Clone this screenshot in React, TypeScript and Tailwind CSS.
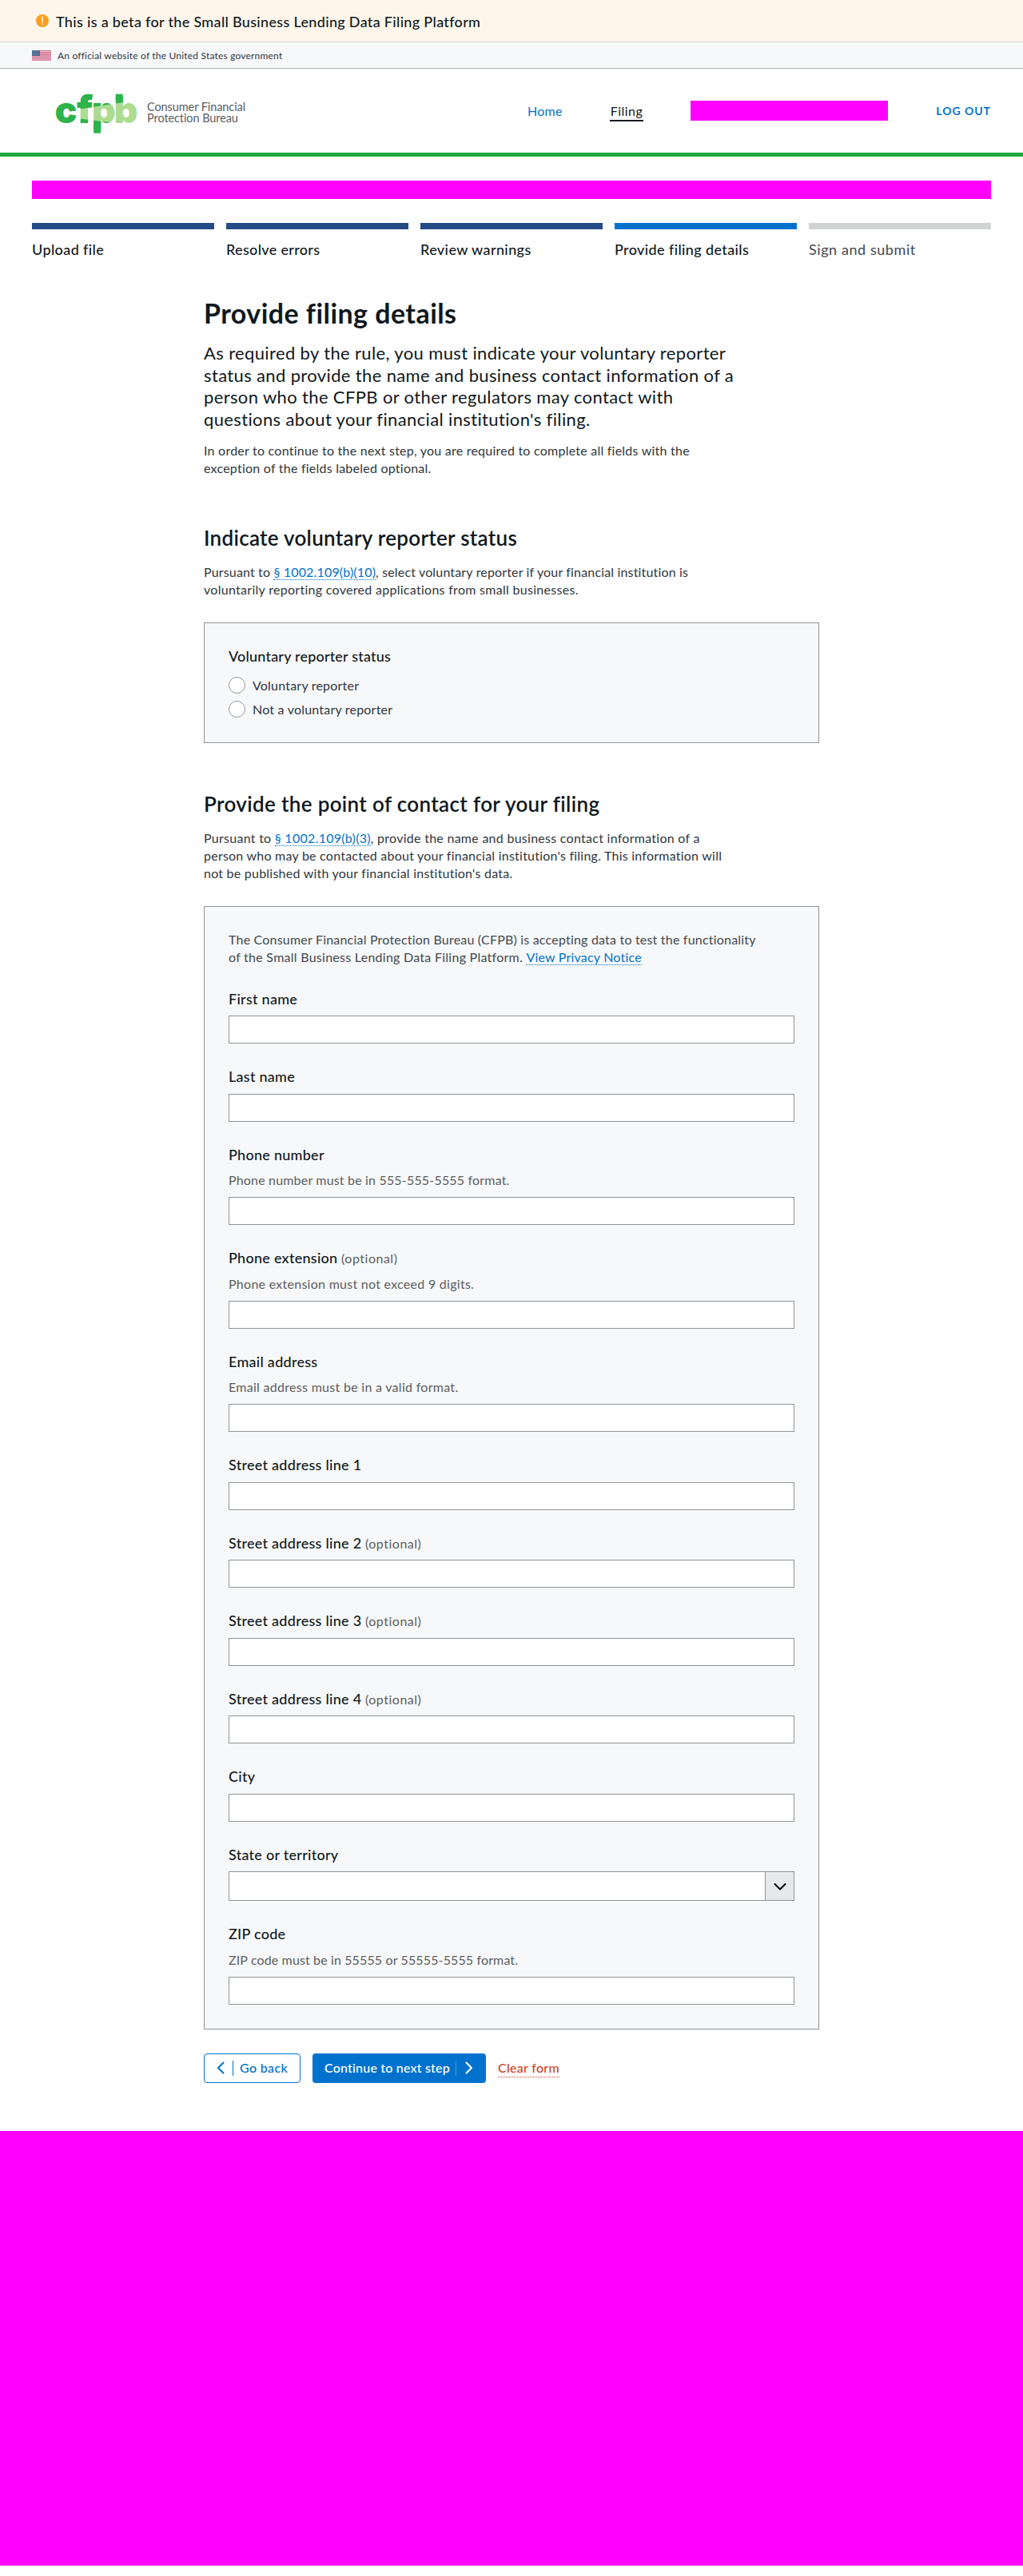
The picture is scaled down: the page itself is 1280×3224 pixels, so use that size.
import type { ReactNode } from 'react';

type FieldProps = {
  label: string;
  optional?: boolean;
  hint?: string;
  hintTracking?: string;
  select?: boolean;
};

const fields: FieldProps[] = [
  { label: 'First name' },
  { label: 'Last name' },
  { label: 'Phone number', hint: 'Phone number must be in 555-555-5555 format.', hintTracking: 'tracking-[0.011em]' },
  { label: 'Phone extension', optional: true, hint: 'Phone extension must not exceed 9 digits.', hintTracking: 'tracking-[0.017em]' },
  { label: 'Email address', hint: 'Email address must be in a valid format.', hintTracking: 'tracking-[0.018em]' },
  { label: 'Street address line 1' },
  { label: 'Street address line 2', optional: true },
  { label: 'Street address line 3', optional: true },
  { label: 'Street address line 4', optional: true },
  { label: 'City' },
  { label: 'State or territory', select: true },
  { label: 'ZIP code', hint: 'ZIP code must be in 55555 or 55555-5555 format.', hintTracking: 'tracking-[0.008em]' },
];

const steps = [
  { label: 'Upload file', bar: 'bg-[#254b87]', text: 'font-medium tracking-[0.022em] text-[#101820]' },
  { label: 'Resolve errors', bar: 'bg-[#254b87]', text: 'font-medium tracking-[0.018em] text-[#101820]' },
  { label: 'Review warnings', bar: 'bg-[#254b87]', text: 'font-medium tracking-[0.022em] text-[#101820]' },
  { label: 'Provide filing details', bar: 'bg-[#0072ce]', text: 'font-medium tracking-[0.021em] text-[#101820]' },
  { label: 'Sign and submit', bar: 'bg-[#d2d3d5]', text: 'tracking-[0.032em] text-[#43484e]' },
];

function Link({ children }: { children: ReactNode }) {
  return (
    <a href="#" className="border-b border-dotted border-[#0072ce] text-[#0072ce]">
      {children}
    </a>
  );
}

function Chevron({ d, className }: { d: string; className: string }) {
  return (
    <svg viewBox="0 0 16 16" fill="none" stroke="currentColor" strokeWidth="2" strokeLinecap="round" strokeLinejoin="round" className={className}>
      <path d={d} />
    </svg>
  );
}

function Logo() {
  return (
    <svg width="104" height="54" viewBox="68 114 104 54" className="shrink-0 overflow-visible" aria-label="cfpb">
      <defs>
        <pattern id="beam" patternUnits="userSpaceOnUse" x="60" y="100" width="130" height="90" viewBox="60 100 130 90">
          <rect x="60" y="100" width="130" height="90" fill="#2cb34a" />
          <polygon points="96,137 176,124.800 176,180 144.400,180 144.400,154 96,148" fill="#addc91" />
        </pattern>
      </defs>
      <g fill="url(#beam)">
        <text y="153.800" fontFamily="Inter, sans-serif" fontWeight="900" fontSize="46.5">
          <tspan x="68.6">c</tspan>
          <tspan x="96" fontSize="48.5">f</tspan>
          <tspan x="114.8">p</tspan>
          <tspan x="142.5">b</tspan>
        </text>
        <rect x="117.200" y="155" width="8.800" height="11.700" />
        <rect x="144.700" y="117.700" width="8.900" height="8" />
      </g>
    </svg>
  );
}

function Flag() {
  return (
    <svg width="24" height="13" viewBox="0 0 24 13" shapeRendering="crispEdges" className="shrink-0">
      <rect width="24" height="13" fill="#db9bb0" />
      {[0, 2, 4, 6, 8, 10, 12].map((y) => (
        <rect key={y} y={y} width="24" height="1" fill={y < 5 ? '#cf6b86' : '#da8fa7'} />
      ))}
      <rect y="1" width="24" height="1" fill="#edc9d4" />
      <rect y="3" width="24" height="1" fill="#e9bccb" />
      <rect width="10" height="7" fill="#4d6b90" />
      {[1, 3, 5].map((y) =>
        [1, 3, 5, 7].map((x) => <rect key={`${x}-${y}`} x={x} y={y} width="1" height="1" fill="#7189a6" />),
      )}
    </svg>
  );
}

function Field({ label, optional, hint, hintTracking = '', select }: FieldProps) {
  return (
    <div className="mt-[30px]">
      <label className="block h-[22.5px] text-[18px] leading-[22.5px] font-medium tracking-[0.015em] text-[#101820]">
        {label}
        {optional && <span className="text-[16px] font-normal tracking-[0.032em] text-[#5a5d61]"> (optional)</span>}
      </label>
      {hint && <p className={`mt-[10px] leading-[22px] text-[#5a5d61] ${hintTracking}`}>{hint}</p>}
      {select ? (
        <div className="mt-[10px] flex h-[37px] border border-[#919395] bg-white">
          <div className="flex-1" />
          <div className="flex w-[36px] items-center justify-center border-l border-[#919395] bg-[#e7e8e9] text-black">
            <Chevron d="M1.5 5l6.5 6.5L14.5 5" className="size-[16px]" />
          </div>
        </div>
      ) : (
        <input className="mt-[10px] block h-[35px] w-full border border-[#919395] bg-white px-2 outline-none" />
      )}
    </div>
  );
}

function Radio({ label, className }: { label: string; className: string }) {
  return (
    <label className={className}>
      <span className="size-[21px] rounded-full border border-[#919395] bg-white" />
      <span className="tracking-[0.013em]">{label}</span>
    </label>
  );
}

export default function App() {
  return (
    <div className="min-h-[3224px] bg-white font-['Lato',sans-serif] text-[16px] leading-[22px] text-[#2f363d]">
      <div className="flex h-[53px] items-center border-b border-[#d6d2ce] bg-[#fff6eb] pl-[45px]">
        <svg width="16" height="16" viewBox="0 0 16 16" className="shrink-0">
          <circle cx="8" cy="8" r="8" fill="#ff9e1b" />
          <path d="M8 3.3v6" stroke="#fff" strokeWidth="1.5" strokeLinecap="round" />
          <circle cx="8" cy="12.2" r="1" fill="#fff" />
        </svg>
        <p className="ml-[9px] pt-px text-[18px] font-medium tracking-[0.018em] text-[#101820]">
          This is a beta for the Small Business Lending Data Filing Platform
        </p>
      </div>
      <div className="flex h-[33px] items-center border-b border-[#b4b5b6] bg-[#f7f8f9] pl-[40px]">
        <Flag />
        <p className="ml-[8px] pt-[2px] text-[12px] leading-[16px] tracking-[0.016em]">
          An official website of the United States government
        </p>
      </div>
      <header className="flex h-[110px] items-center border-b-[5px] border-[#20aa3f] pr-[40px] pl-[68px]">
        <div className="pt-[5px]">
          <Logo />
        </div>
        <div className="ml-[12px] pt-[4px] text-[14.5px] leading-[14px] tracking-[-0.006em] text-[#5a5d61]">
          <p>Consumer Financial</p>
          <p>Protection Bureau</p>
        </div>
        <nav className="ml-auto flex items-center">
          <a href="#" className="tracking-[0.02em] text-[#0072ce]">Home</a>
          <a href="#" className="ml-[59px] flex h-[26px] items-center border-b-2 border-[#101820] px-px pt-[4px] pb-[2px] tracking-[0.028em] text-[#101820]">
            Filing
          </a>
          <div className="ml-[59px] h-[25px] w-[247px] bg-[#ff00ff]" />
          <a href="#" className="ml-[60px] text-[14px] font-bold tracking-[0.07em] text-[#0072ce]">LOG OUT</a>
        </nav>
      </header>

      <div className="mx-[40px] mt-[30px] h-[23px] bg-[#ff00ff]" />
      <ol className="mx-[40px] mt-[30px] grid grid-cols-5 gap-[15px]">
        {steps.map((s) => (
          <li key={s.label}>
            <div className={`h-[8px] ${s.bar}`} />
            <p className={`mt-[14px] text-[18px] leading-[22.5px] ${s.text}`}>{s.label}</p>
          </li>
        ))}
      </ol>

      <main className="mx-auto mt-[47px] w-[770px]">
        <h1 className="text-[34px] leading-[42.5px] font-bold tracking-[0.013em] text-[#101820]">Provide filing details</h1>
        <p className="mt-[15px] text-[22px] leading-[27.5px] tracking-[0.0165em] text-[#101820]">
          As required by the rule, you must indicate your voluntary reporter
          <br />
          status and provide the name and business contact information of a
          <br />
          person who the CFPB or other regulators may contact with
          <br />
          questions about your financial institution's filing.
        </p>
        <p className="mt-[15px] tracking-[0.0145em]">
          In order to continue to the next step, you are required to complete all fields with the
          <br />
          exception of the fields labeled optional.
        </p>

        <h2 className="mt-[60px] text-[26px] leading-[32.5px] font-semibold tracking-[0.011em] text-[#101820]">
          Indicate voluntary reporter status
        </h2>
        <p className="mt-[15px] tracking-[0.01em]">
          Pursuant to <Link>§ 1002.109(b)(10)</Link>, select voluntary reporter if your financial institution is
          <br />
          <span className="tracking-[0.018em]">voluntarily reporting covered applications from small businesses.</span>
        </p>
        <section className="mt-[30px] h-[151.5px] border border-[#919395] bg-[#f7f8f9] px-[30px] pt-[30px]">
          <p className="text-[18px] leading-[22.5px] font-medium tracking-[0.011em] text-[#101820]">Voluntary reporter status</p>
          <Radio label="Voluntary reporter" className="mt-[14.5px] flex h-[22px] items-center gap-[9px]" />
          <Radio label="Not a voluntary reporter" className="mt-[8px] flex h-[22px] items-center gap-[9px]" />
        </section>

        <h2 className="mt-[60px] text-[26px] leading-[32.5px] font-semibold tracking-[0.013em] text-[#101820]">
          Provide the point of contact for your filing
        </h2>
        <p className="mt-[15px] tracking-[0.0145em]">
          <span className="tracking-[0.017em]">
            Pursuant to <Link>§ 1002.109(b)(3)</Link>, provide the name and business contact information of a
          </span>
          <br />
          person who may be contacted about your financial institution's filing. This information will
          <br />
          not be published with your financial institution's data.
        </p>
        <section className="mt-[30px] border border-[#919395] bg-[#f7f8f9] p-[30px]">
          <p className="tracking-[0.0125em] text-[#43484e]">
            The Consumer Financial Protection Bureau (CFPB) is accepting data to test the functionality
            <br />
            <span className="tracking-[0.0165em]">of the Small Business Lending Data Filing Platform. </span>
            <Link>View Privacy Notice</Link>
          </p>
          {fields.map((f) => (
            <Field key={f.label} {...f} />
          ))}
        </section>

        <div className="mt-[30px] flex h-[37px] items-center">
          <button className="flex h-full w-[121px] items-center rounded-[4px] border border-[#0072ce] pl-[12px] text-[#0072ce]">
            <Chevron d="M11.5 1.5L5 8l6.5 6.5" className="size-[16px]" />
            <span className="ml-[7px] h-[19px] w-px bg-[#0072ce]" />
            <span className="ml-[8px] font-medium tracking-[0.022em]">Go back</span>
          </button>
          <button className="ml-[15px] flex h-full w-[217px] items-center rounded-[4px] bg-[#0072ce] pl-[15px] text-white">
            <span className="font-medium tracking-[0.012em]">Continue to next step</span>
            <span className="ml-[7px] h-[19px] w-px bg-[#4d9ddd]" />
            <Chevron d="M4.5 1.5L11 8l-6.5 6.5" className="ml-[8px] size-[16px]" />
          </button>
          <a href="#" className="ml-[15px] border-b border-dotted border-[#d14124] font-medium tracking-[0.018em] text-[#d14124]">
            Clear form
          </a>
        </div>
      </main>
      <div className="mt-[60px] h-[544px] bg-[#ff00ff]" />
    </div>
  );
}
